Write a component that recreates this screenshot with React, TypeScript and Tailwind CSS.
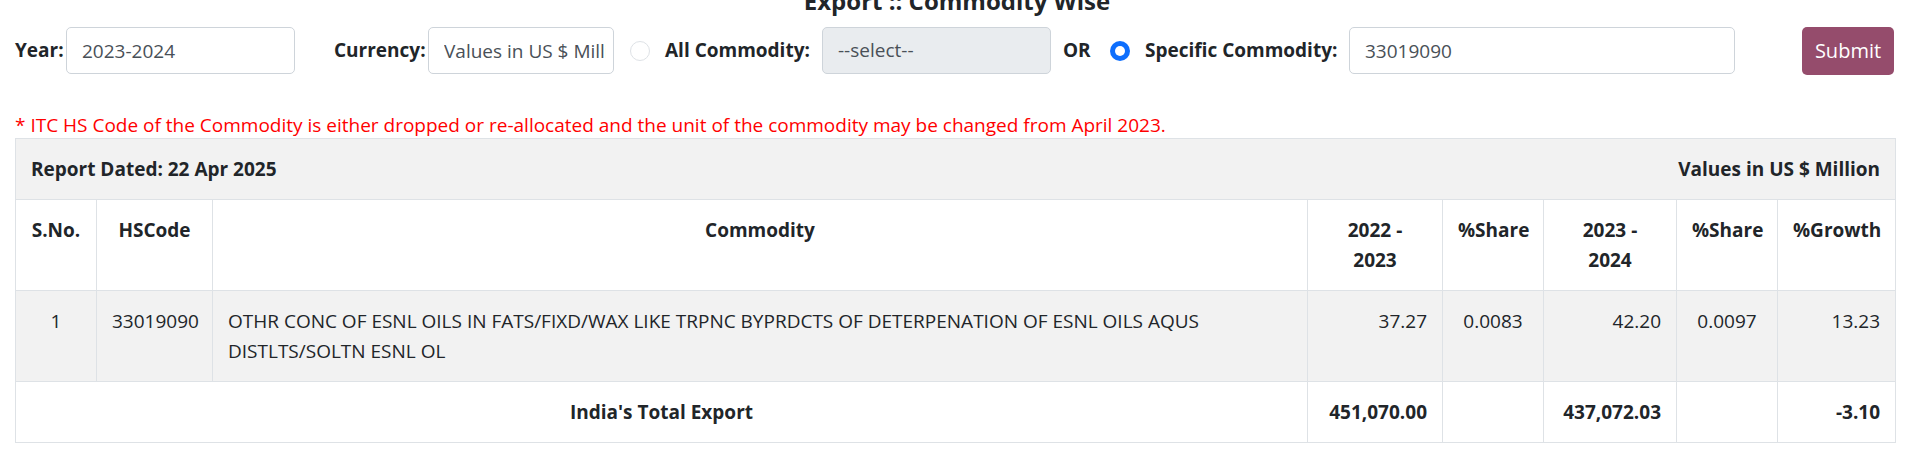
import { useState } from 'react'

// Export :: Commodity Wise report (scrolled slightly, title cut at top)

const cols = [81, 116, 1095, 135, 101, 133, 101, 118]

export default function App() {
  const [year, setYear] = useState('2023-2024')
  const [code, setCode] = useState('33019090')
  const [mode, setMode] = useState<'all' | 'specific'>('specific')

  return (
    <div className="w-[1914px] h-[474px] overflow-hidden bg-white px-[15px] font-['Open_Sans',sans-serif] text-[19px] text-[#212529]">
      <div className="-mt-[14px] h-[29px] text-center text-[24px] font-bold leading-[29px]">
        Export :: Commodity Wise
      </div>

      {/* search form */}
      <div className="mt-[12px] flex h-[47px] items-center">
        <label className="w-[44px] whitespace-nowrap font-bold">Year:</label>
        <input
          value={year}
          onChange={e => setYear(e.target.value)}
          className="ml-[7px] h-[47px] w-[229px] rounded-[5px] border border-[#ced4da] px-[15px] text-[#495057] outline-none"
        />
        <label className="ml-[39px] w-[88px] whitespace-nowrap font-bold">Currency:</label>
        <input
          readOnly
          value="Values in US $ Million"
          className="ml-[6px] h-[47px] w-[186px] rounded-[5px] border border-[#ced4da] pl-[15px] pr-[7px] text-[#495057] outline-none"
        />

        <button
          onClick={() => setMode('all')}
          className={
            mode === 'all'
              ? 'ml-[16px] flex h-[20px] w-[20px] items-center justify-center rounded-full bg-[#0d6efd]'
              : 'ml-[16px] flex h-[20px] w-[20px] items-center justify-center rounded-full border border-[#dee2e6] bg-white'
          }
        >
          {mode === 'all' && <span className="h-[10px] w-[10px] rounded-full bg-white" />}
        </button>
        <label className="ml-[15px] w-[147px] whitespace-nowrap font-bold">All Commodity:</label>
        <div className="ml-[10px] flex h-[47px] w-[229px] items-center rounded-[5px] border border-[#ced4da] bg-[#e9ecef] px-[15px] text-[#495057]">
          --select--
        </div>
        <span className="ml-[12px] w-[28px] font-bold">OR</span>

        <button
          onClick={() => setMode('specific')}
          className={
            mode === 'specific'
              ? 'ml-[19px] flex h-[20px] w-[20px] items-center justify-center rounded-full bg-[#0d6efd]'
              : 'ml-[19px] flex h-[20px] w-[20px] items-center justify-center rounded-full border border-[#dee2e6] bg-white'
          }
        >
          {mode === 'specific' && <span className="h-[10px] w-[10px] rounded-full bg-white" />}
        </button>
        <label className="ml-[15px] w-[193px] whitespace-nowrap font-bold">Specific Commodity:</label>
        <input
          value={code}
          onChange={e => setCode(e.target.value)}
          className="ml-[11px] h-[47px] w-[386px] rounded-[5px] border border-[#ced4da] px-[15px] text-[#495057] outline-none"
        />
        <button className="ml-[67px] h-[48px] w-[92px] rounded-[5px] bg-[#954c6c] text-[20px] text-white">Submit</button>
      </div>

      <p className="mt-[38px] h-[26px] leading-[26px] text-[#ff0000]">
        * ITC HS Code of the Commodity is either dropped or re-allocated and the unit of the commodity may be changed from April 2023.
      </p>

      <table className="w-[1880px] table-fixed border-collapse leading-[30px]">
        <colgroup>
          {cols.map((w, i) => (
            <col key={i} style={{ width: w }} />
          ))}
        </colgroup>
        <tbody>
          <tr className="bg-[#f2f2f2]">
            <td colSpan={8} className="border border-[#dee2e6] p-[15px] font-bold">
              <div className="flex justify-between">
                <span>Report Dated: 22 Apr 2025</span>
                <span>Values in US $ Million</span>
              </div>
            </td>
          </tr>
          <tr className="align-top font-bold">
            <th className="border border-[#dee2e6] p-[15px]">S.No.</th>
            <th className="border border-[#dee2e6] p-[15px]">HSCode</th>
            <th className="border border-[#dee2e6] p-[15px]">Commodity</th>
            <th className="border border-[#dee2e6] p-[15px]">
              2022 -<br />2023
            </th>
            <th className="border border-[#dee2e6] p-[15px]">%Share</th>
            <th className="border border-[#dee2e6] p-[15px]">
              2023 -<br />2024
            </th>
            <th className="border border-[#dee2e6] p-[15px]">%Share</th>
            <th className="border border-[#dee2e6] p-[15px]">%Growth</th>
          </tr>
          <tr className="bg-[#f2f2f2] align-top">
            <td className="border border-[#dee2e6] p-[15px] text-center">1</td>
            <td className="border border-[#dee2e6] p-[15px] text-center">33019090</td>
            <td className="border border-[#dee2e6] p-[15px]">
              OTHR CONC OF ESNL OILS IN FATS/FIXD/WAX LIKE TRPNC BYPRDCTS OF DETERPENATION OF ESNL OILS AQUS
              <br />
              DISTLTS/SOLTN ESNL OL
            </td>
            <td className="border border-[#dee2e6] p-[15px] text-right">37.27</td>
            <td className="border border-[#dee2e6] p-[15px] text-center">0.0083</td>
            <td className="border border-[#dee2e6] p-[15px] text-right">42.20</td>
            <td className="border border-[#dee2e6] p-[15px] text-center">0.0097</td>
            <td className="border border-[#dee2e6] p-[15px] text-right">13.23</td>
          </tr>
          <tr className="font-bold">
            <td colSpan={3} className="border border-[#dee2e6] p-[15px] text-center">India's Total Export</td>
            <td className="border border-[#dee2e6] p-[15px] text-right">451,070.00</td>
            <td className="border border-[#dee2e6] p-[15px]"></td>
            <td className="border border-[#dee2e6] p-[15px] text-right">437,072.03</td>
            <td className="border border-[#dee2e6] p-[15px]"></td>
            <td className="border border-[#dee2e6] p-[15px] text-right">-3.10</td>
          </tr>
        </tbody>
      </table>
    </div>
  )
}
